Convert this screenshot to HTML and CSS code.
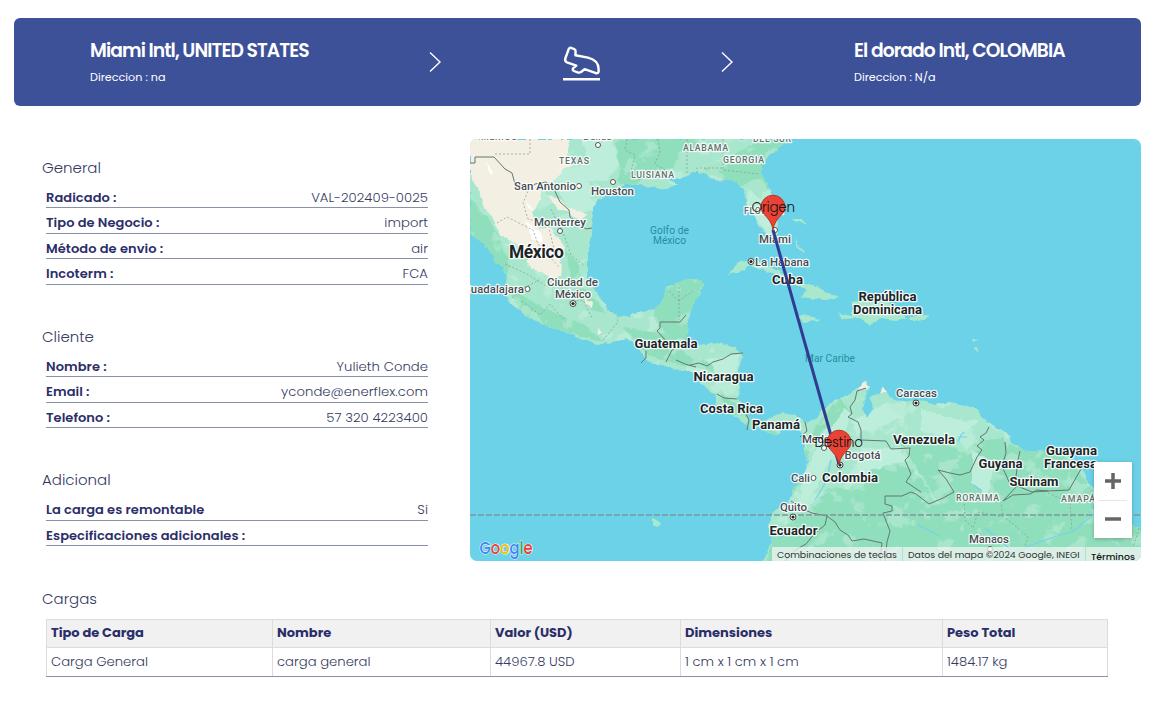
FILE: index.html
```html
<!DOCTYPE html>
<html lang="es">
<head>
<meta charset="utf-8">
<title>Detalle de envío</title>
<link rel="stylesheet" href="styles.css">
</head>
<body>
<main class="page">
  <header class="route">
    <div class="place origin"><h1>Miami Intl, UNITED STATES</h1><p>Direccion : na</p></div>
    <svg class="chevron" viewBox="0 0 14 22"><path d="M2 1.5 12 11 2 20.5"/></svg>
    <svg class="plane" viewBox="562 44 40 38"><path d="M568.800 48.800Q569.700 47.400 571.500 48L574.300 49.100Q575.800 49.700 575.600 51.500L575.400 55.300 588 57.600C595 59.400 598.600 63.500 598.600 69V71.500Q598.300 73.600 596 73.200L584.600 69.200 581 72Q579.500 73 577.500 72.300L574 71Q572 70 573.200 68.200L576.300 65.600 567 62.300Q564.600 61.200 565.300 58.500Z"/><path d="M563 79.300H600"/></svg>
    <svg class="chevron second" viewBox="0 0 14 22"><path d="M2 1.5 12 11 2 20.5"/></svg>
    <div class="place destination"><h1>El dorado Intl, COLOMBIA</h1><p>Direccion : N/a</p></div>
  </header>

  <div class="body">
    <div class="details">
      <section>
        <h2>General</h2>
        <dl>
          <div class="row"><dt>Radicado :</dt><dd>VAL-202409-0025</dd></div>
          <div class="row"><dt>Tipo de Negocio :</dt><dd>import</dd></div>
          <div class="row"><dt>Método de envio :</dt><dd>air</dd></div>
          <div class="row"><dt>Incoterm :</dt><dd>FCA</dd></div>
        </dl>
      </section>
      <section>
        <h2>Cliente</h2>
        <dl>
          <div class="row"><dt>Nombre :</dt><dd>Yulieth Conde</dd></div>
          <div class="row"><dt>Email :</dt><dd>yconde@enerflex.com</dd></div>
          <div class="row"><dt>Telefono :</dt><dd>57 320 4223400</dd></div>
        </dl>
      </section>
      <section>
        <h2>Adicional</h2>
        <dl>
          <div class="row"><dt>La carga es remontable</dt><dd>Si</dd></div>
          <div class="row"><dt>Especificaciones adicionales :</dt><dd></dd></div>
        </dl>
      </section>
    </div>

    <div class="map">
      <svg class="tiles" viewBox="470 139 671 422">
        <defs>
          <filter id="rough" x="-5%" y="-5%" width="110%" height="110%"><feTurbulence type="fractalNoise" baseFrequency=".13" numOctaves="2" seed="4"/><feDisplacementMap in="SourceGraphic" scale="5" xChannelSelector="R" yChannelSelector="G"/></filter>
          <filter id="mottle" x="0" y="0" width="100%" height="100%"><feTurbulence type="fractalNoise" baseFrequency=".045 .055" numOctaves="4" seed="9"/><feColorMatrix values="0 0 0 0 .74  0 0 0 0 .93  0 0 0 0 .86  12 0 0 0 -6.8"/></filter>
          <path id="coast" d="M470 139V233L475 238 490 250 495 262 504 268 507 278 504 290 510 303 525 315 545 325 568 333 580 339 598 345 612 342 628 339 638 349 648 361 665 366 678 370 695 373 700 383 715 395 717 405 733 415 745 423 750 428 757 425 768 433 777 435 783 428 791 424 800 432 805 438 803 450 808 462 805 473 793 490 787 503 773 513 768 527 772 537 768 550 763 561H1141V527L1122 523 1097 513 1092 507 1097 493 1088 483 1082 467 1067 455 1048 450 1025 452 1012 442 1005 433 990 423 982 418 980 411 965 405 948 402 935 405 918 400 903 402 890 397 883 386 880 393 870 397 872 410 867 418 862 410 865 397 870 387 865 382 857 388 850 393 837 400 827 405 817 418 808 423 803 420 793 415 783 413 770 417 760 422 750 418 743 408 737 398 740 387 738 370 742 357 737 348 717 343 697 345 684 342 687 335 688 317 693 305 700 292 703 283 697 279 678 282 665 288 662 302 655 310 642 312 625 317 612 313 602 302 593 287 587 275 587 252 592 232 593 208 598 200 615 190 625 185 638 185 652 187 665 190 678 185 667 180 685 177 695 172 707 175 717 182 730 180 740 185 745 192 748 207 755 215 760 228 770 238 777 233 778 222 773 202 768 185 762 175 762 165 770 155 783 145 790 139Z"/>
          <clipPath id="land"><use href="#coast"/></clipPath>
        </defs>
        <rect class="sea" x="470" y="139" width="671" height="422"/>
        <g filter="url(#rough)">
          <use href="#coast" class="land"/>
          <g clip-path="url(#land)">
            <path class="lush" d="M614 139H700L695 153 680 151 673 169 650 170 637 184 613 188 621 168ZM703 170 728 157 765 139H798L780 155 764 166 770 190 760 178 738 187ZM470 198 486 216 500 237 509 265 505 284 492 260 470 239ZM565 250 578 263 584 289 606 312 591 309 573 287ZM508 288 545 309 584 325 604 342 566 333 523 316ZM660 280 704 278 693 310 687 339 670 339 653 319ZM624 328 665 334 691 359 728 363 736 377 716 371 691 367 650 357ZM721 391 742 411 774 423 777 434 748 429 724 413ZM839 397 853 414 844 432 822 430 808 455 803 480 790 500 803 451 817 424ZM846 490 885 461 914 470 939 505 988 502 1010 444 1060 450 1096 494 1092 514 1141 526V561H767L774 529 796 520 829 487ZM898 439 937 438 962 453 979 441 1005 438 1018 506 944 511Z"/>
            <rect x="470" y="139" width="671" height="422" filter="url(#mottle)" opacity=".3"/>
            <path class="pale" d="M580 139 612 141 620 164 607 181 588 180 594 208 574 217 558 192 542 190 566 169 591 163ZM748 187 762 201 775 231 768 236 756 219 747 203ZM852 421 884 404 902 417 875 429 856 434ZM862 448 899 447 908 461 883 467 854 476ZM921 408 954 420 979 421 957 438 921 431ZM972 450 994 463 988 497 972 484ZM820 434 833 425 844 408 853 415 832 455 818 486 802 508 801 489ZM706 360 740 354 734 378 718 374Z"/>
            <path class="desert" d="M470 139H571L566 155 572 163 563 171 556 180 541 185 541 200 532 212 540 228 549 241 553 252 562 266 561 276 553 280 542 272 531 269 524 250 514 242 500 234 493 218 483 206 479 190 470 174ZM547 196 560 199 568 208 578 211 587 214 580 222 570 213 559 210ZM584 298 593 302 592 308 586 304ZM598 328 602 332 599 336ZM857 388 864 381 873 386 862 390ZM880 385H887V392H880Z"/>
            <path class="desert" d="M541 228 550 226 556 236 566 248 560 262 550 254Z"/>
            <path class="snow" d="M486 162 493 174 488 173ZM526 199 532 209 528 208ZM524 220 540 232 544 242 531 238 528 228Z"/>
          </g>
          <path class="island" d="M728 275 740 262 755 260 776 270 798 283 813 285 824 290 839 297 825 300 800 297 807 291 787 282 766 271 750 265 744 270ZM796 316 811 315 818 320 805 323 797 319ZM838 313 852 316 852 303 864 300 882 301 899 309 907 318 896 320 881 318 869 326 861 318 842 319ZM911 316 929 315 926 321 909 320Z"/>
          <path class="island" d="M794 237 800 248 804 255 799 251ZM790 219H803L808 226 803 222ZM972 339 978 339 973 342ZM976 346 979 352 975 350ZM653 518 661 523 657 527 653 524Z"/>
        </g>
        <g class="borders">
          <path d="M470 163H475V157H494L505 169 512 173 515 184 521 186 527 191 535 184 546 182 554 189 560 202 569 210 570 217 586 229 592 228M686 315 680 322H660V328L657 331 669 344M684 343 672 350 666 362M646 351V358L641 363M743 353 731 354 723 359 713 362 707 366 699 363 690 365M676 360 685 364 696 367M717 394 724 398 737 399M746 414 749 420 747 430M805 422 807 431 800 437M866 388 857 391 855 400 850 407 852 414 848 417 858 422 861 430 861 440 886 441 891 449 910 448 909 456 905 460 911 474 906 482 921 492M989 427 986 433 980 437 984 440 977 446 982 450 977 457 970 472 960 475 950 473 938 470 946 479 954 492 943 498 929 504 916 494 911 492 902 496H885V504L892 506V511L883 513 886 521 890 531 887 542 885 561M1005 442 1006 453 1002 466 1010 484 1018 485 1003 501M1020 451 1018 460 1015 485 1032 492 1048 491 1069 490 1081 469M1003 501 1013 495 1030 494 1037 490 1048 491M791 501 805 510 812 513 827 516 825 525 815 533 806 544 797 549 785 561M827 516 835 522 840 530 848 535 852 541 864 539 882 543 880 561"/>
          <path class="dash" d="M530 139V154H494M627 139 625 150 635 155 630 175 640 180M658 139 660 152 655 164 665 170M687 139V175M723 139 723 170 758 174M697 173V168H723M531 184 523 203 528 219 548 224 554 249M497 223 507 217 533 230 538 244 559 267M551 209 564 235 571 255 585 266M505 264 527 274 546 286 560 284 570 302 583 300 592 318M512 298 522 289 539 280M522 301 540 315 550 304 566 322M679 287V320M679 301 668 290M679 301 693 291M603 340 618 322 617 317M964 500 965 520 973 528 978 512 1003 517 1001 502M1006 518 1028 537 1020 561M1048 493 1070 503 1072 531M1139 528 1134 545"/>
        </g>
        <path class="river" d="M831 460 827 480 815 500M974 485 982 491M918 525 940 536M985 528 1000 540 1013 552 1048 539 1074 531 1094 514M780 539 789 529"/>
        <path class="river lake" d="M958 442 961 435 964 432M958 437H967"/>
        <path class="equator" d="M470 515H1141"/>

        <g class="capital"><circle cx="598" cy="145" r="2.5"/><circle cx="579" cy="186" r="2.5"/><circle cx="613" cy="182" r="2.5"/><circle cx="560" cy="231" r="2.5"/><circle cx="527.500" cy="289" r="2.5"/><circle cx="775" cy="230" r="2.5"/><circle cx="824" cy="448" r="2.5"/><circle cx="813.500" cy="478" r="2.5"/><circle cx="990" cy="549" r="2.5"/></g>
        <g class="seat-ring"><circle cx="573" cy="303.500" r="3"/><circle cx="751" cy="261.500" r="3"/><circle cx="916" cy="403" r="3"/><circle cx="840" cy="465" r="3"/><circle cx="793" cy="517" r="3"/></g>
        <g class="seat-dot"><circle cx="573" cy="303.500" r="1.6"/><circle cx="751" cy="261.500" r="1.6"/><circle cx="916" cy="403" r="1.6"/><circle cx="840" cy="465" r="1.6"/><circle cx="793" cy="517" r="1.6"/></g>

        <g class="region">
          <text x="481" y="140" textLength="36">MÉXICO</text>
          <text x="559" y="164" textLength="30">TEXAS</text><text class="dallas" x="583" y="140" textLength="29">Dallas</text>
          <text x="631" y="178" textLength="43">LUISIANA</text><text x="683" y="151" textLength="45">ALABAMA</text>
          <text x="723" y="163" textLength="41">GEORGIA</text><text x="753" y="141.500" textLength="38">DEL SUR</text>
          <text x="744" y="214" textLength="39">FLORIDA</text><text x="956" y="501" textLength="43">RORAIMA</text><text x="1061" y="502" textLength="34">AMAPÁ</text>
        </g>
        <g class="city">
          <text x="514" y="189.500" textLength="62">San Antonio</text><text x="591" y="195" textLength="43">Houston</text>
          <text x="534" y="225.500" textLength="52">Monterrey</text><text x="463" y="293" textLength="61">Guadalajara</text>
          <text x="547" y="286" textLength="51">Ciudad de</text><text x="555" y="297.500" textLength="36">México</text>
          <text x="759" y="243" textLength="32">Miami</text><text x="755" y="265.500" textLength="54">La Habana</text>
          <text x="896" y="397" textLength="41">Caracas</text><text x="802" y="443" textLength="42">Medellín</text>
          <text x="844.500" y="459" textLength="36">Bogotá</text><text x="791" y="482" textLength="19">Cali</text>
          <text x="780" y="511" textLength="27">Quito</text><text x="969" y="543" textLength="40">Manaos</text>
        </g>
        <g class="water"><text x="650" y="234" textLength="39">Golfo de</text><text x="653" y="244" textLength="33">México</text><text x="805" y="362" textLength="50">Mar Caribe</text></g>
        <g class="country">
          <text class="big" x="509" y="257.500" textLength="55">México</text>
          <text x="772" y="284" textLength="31">Cuba</text><text x="858.500" y="300.500" textLength="58">República</text><text x="853" y="313.500" textLength="69">Dominicana</text>
          <text x="634.500" y="348" textLength="63">Guatemala</text><text x="693.500" y="381" textLength="60">Nicaragua</text><text x="700" y="413" textLength="63">Costa Rica</text>
          <text x="752" y="428.500" textLength="48">Panamá</text><text x="893" y="444" textLength="62">Venezuela</text><text x="822" y="482" textLength="56">Colombia</text>
          <text x="769.500" y="535" textLength="48">Ecuador</text><text x="978.500" y="468" textLength="44">Guyana</text><text x="1009.500" y="486" textLength="49">Surinam</text>
          <text x="1046" y="455" textLength="51">Guayana</text><text x="1044" y="468" textLength="53">Francesa</text>
        </g>
        <path class="flight" d="M773 230 839 464"/>
        <g class="pin"><path d="M773 229.500C771 217 761 215 761 207.200A12 12 0 0 1 785 207.200C785 215 775 217 773 229.500Z"/><path d="M839 464.500C837 452 827 450 827 442.200A12 12 0 0 1 851 442.200C851 450 841 452 839 464.500Z"/></g>
        <g class="marker"><text x="751.500" y="212" textLength="43.500">Origen</text><text x="814.500" y="447" textLength="48.500">Destino</text></g>
        <g class="logo"><text x="479.500" y="553.500" textLength="53" lengthAdjust="spacingAndGlyphs"><tspan class="gb">G</tspan><tspan class="gr">o</tspan><tspan class="gy">o</tspan><tspan class="gb">g</tspan><tspan class="gg">l</tspan><tspan class="gr">e</tspan></text></g>
      </svg>
      <div class="zoom"><button aria-label="Acercar"><svg viewBox="0 0 18 18"><path d="M9 1V17M1 9H17"/></svg></button><button aria-label="Alejar"><svg viewBox="0 0 18 18"><path d="M1 8H17"/></svg></button></div>
      <div class="legal"><span class="l1">Combinaciones de teclas</span><span class="l2">Datos del mapa ©2024 Google, INEGI</span><span class="l3">Términos</span></div>
    </div>
  </div>

  <section class="cargo">
    <h2>Cargas</h2>
    <table>
      <colgroup><col class="c1"><col class="c2"><col class="c3"><col class="c4"><col class="c5"></colgroup>
      <thead><tr><th>Tipo de Carga</th><th>Nombre</th><th>Valor (USD)</th><th>Dimensiones</th><th>Peso Total</th></tr></thead>
      <tbody><tr><td>Carga General</td><td>carga general</td><td>44967.8 USD</td><td>1 cm x 1 cm x 1 cm</td><td>1484.17 kg</td></tr></tbody>
    </table>
  </section>
</main>
</body>
</html>
```
FILE: styles.css
```css
* { box-sizing: border-box; margin: 0; }
body { background: #fff; font-family: Poppins, Inter, "Open Sans", sans-serif; font-size: 13.200px; color: #343a61; overflow: hidden; }
.page { width: 1151px; height: 705px; padding: 18px 10px 0 14px; }
.route { height: 88px; border-radius: 6px; background: #3d5199; color: #fff; display: flex; align-items: flex-start; padding-left: 76px; }
.place { padding-top: 19px; white-space: nowrap; }
.origin { width: 338px; }
.destination { margin-left: 120px; }
.place h1 { font-size: 18.700px; line-height: 27px; font-weight: 600; letter-spacing: -.900px; }
.place p { font-size: 11.200px; line-height: 18px; margin-top: 4px; font-weight: 400; }
.chevron { width: 14px; height: 22px; margin-top: 33px; fill: none; stroke: #fff; stroke-width: 1.4; }
.plane { width: 40px; height: 38px; margin: 26px 0 0 120px; fill: none; stroke: #fff; stroke-width: 2.4; stroke-linejoin: round; }
.chevron.second { margin-left: 118px; }
.body { display: flex; justify-content: space-between; margin-top: 33px; height: 422px; }
.details { width: 386px; margin-left: 28px; padding-top: 17px; }
h2 { font-size: 15px; line-height: 24px; font-weight: 300; }
.details section { margin-bottom: 40.200px; }
.details dl { margin: 2.900px 0 0 4px; }
.row { display: flex; justify-content: space-between; height: 25.450px; padding-top: 5px; line-height: 19.500px; border-bottom: 1px solid #8791a9; white-space: nowrap; }
dt { font-size: 13px; font-weight: 600; color: #2b2e69; letter-spacing: .070px; }
dd { font-weight: 300; letter-spacing: .050px; }
.map { position: relative; width: 671px; height: 422px; border-radius: 7px; overflow: hidden; }
.tiles { display: block; width: 671px; height: 422px; font-family: Roboto, sans-serif; }
.sea { fill: #6cd2e7; }
.land { fill: #a8e7cd; }
.lush { fill: #90dfbc; }
.pale { fill: #bdeedb; }
.desert { fill: #f4efe3; }
.snow { fill: #fff; }
.island { fill: #aae8ce; }
.borders { fill: none; stroke: #65776f; stroke-width: 1; }
.borders .dash { stroke: #84998f; stroke-width: .7; stroke-dasharray: 2 2; }
.river { fill: none; stroke: #73d2e8; stroke-width: 1.2; }
.equator { fill: none; stroke: #80979c; stroke-width: 1.6; stroke-dasharray: 6 2; }
.capital { fill: #fff; stroke: #555; stroke-width: 1; }
.seat-ring { fill: #fff; stroke: #444; stroke-width: 1; }
.seat-dot { fill: #222; }
.tiles text { paint-order: stroke; stroke: #ffffffd9; stroke-width: 2.5px; stroke-linejoin: round; }
.region { font-size: 8.800px; font-weight: 500; fill: #62716e; }
.region .dallas { font-size: 11px; }
.city { font-size: 11.500px; font-weight: 500; fill: #454b50; }
.tiles .water text { font-size: 10.200px; fill: #288ca1; stroke: none; }
.country { font-size: 13.200px; font-weight: 700; fill: #202427; }
.country .big { font-size: 17.500px; }
.flight { stroke: #303c91; stroke-width: 3; fill: none; }
.pin { fill: #ea4335; stroke: #b73328; stroke-width: 1; }
.tiles .marker text { font-family: Poppins, Inter, sans-serif; font-size: 13.500px; font-weight: 300; fill: #111; stroke: none; }
.tiles .logo text { font-family: Poppins, Lato, sans-serif; font-size: 17px; font-weight: 500; stroke-width: 1.200px; }
.gb { fill: #4285f4; } .gr { fill: #ea4335; } .gy { fill: #fbbc04; } .gg { fill: #34a853; }
.zoom { position: absolute; left: 624px; top: 323px; width: 38px; height: 76px; background: #fff; box-shadow: 0 1px 4px #0004; display: flex; flex-direction: column; align-items: center; }
.zoom button { width: 28px; height: 38px; padding: 0; border: 0; background: none; display: grid; place-items: center; }
.zoom button + button { border-top: 1px solid #e6e6e6; }
.zoom svg { width: 18px; height: 18px; fill: none; stroke: #666; stroke-width: 3.500; }
.legal { position: absolute; right: 0; bottom: 0; width: 369px; height: 14px; display: flex; background: #f5f5f5b8; font-size: 9.370px; line-height: 16px; color: #333; white-space: nowrap; }
.legal span { padding-left: 5px; }
.l1 { width: 131px; border-right: 1px solid #a7e4ca; }
.l2 { width: 183px; border-right: 1px solid #a7e4ca; }
.l3 { font-weight: 500; padding-top: 2px; color: #111; }
.cargo { margin: 26px 0 0 28px; }
table { width: 1061px; margin: 8px 0 0 4px; border-collapse: collapse; table-layout: fixed; }
.c1 { width: 226px; } .c2 { width: 218px; } .c3 { width: 190px; } .c4 { width: 262px; } .c5 { width: 165px; }
th, td { height: 28px; border: 1px solid #dcdcdc; padding: 0 4px; text-align: left; line-height: 20px; }
th { background: #f1f1f1; color: #2b2e69; font-size: 13px; font-weight: 700; padding-bottom: 2px; }
td { height: 29px; font-weight: 300; border-bottom: 1.500px solid #8791a9; }
```
